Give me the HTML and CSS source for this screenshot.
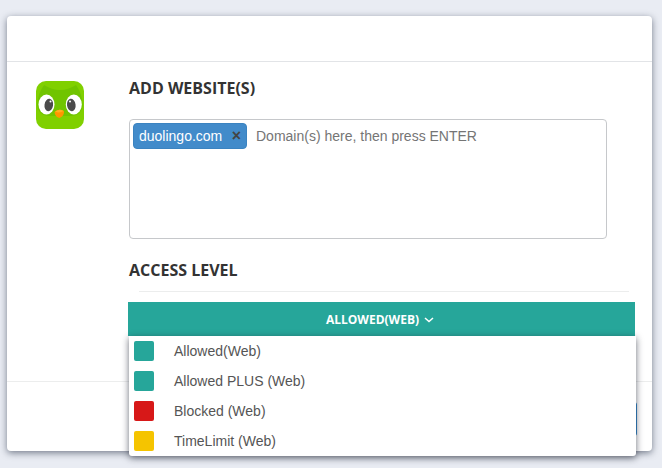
FILE: index.html
```html
<!DOCTYPE html>
<html lang="en">
<head>
<meta charset="utf-8">
<title>Add website</title>
<link rel="stylesheet" href="styles.css">
</head>
<body>
<div class="modal">
  <div class="modal-header"></div>
  <div class="modal-body">
    <svg class="app-icon" width="48" height="48" viewBox="0 0 48 48" aria-label="Duolingo">
      <rect width="48" height="48" rx="10" fill="#80d000"/>
      <path d="M8 4 Q16 9 24 9 Q32 9 40 4 Q46 12 47 24 Q46 34 36 35 H12 Q2 34 1 24 Q2 12 8 4Z" fill="#70c400"/>
      <ellipse cx="10.500" cy="23.500" rx="8" ry="10" fill="#fff"/>
      <ellipse cx="37.800" cy="23.500" rx="8" ry="10" fill="#fff"/>
      <ellipse cx="12.800" cy="24" rx="4.300" ry="6.200" fill="#4b4b4b" transform="rotate(8 12.800 24)"/>
      <ellipse cx="35.300" cy="24" rx="4.300" ry="6.200" fill="#4b4b4b" transform="rotate(-8 35.300 24)"/>
      <circle cx="14.500" cy="20.500" r="1" fill="#fff"/>
      <circle cx="34" cy="20.500" r="1" fill="#fff"/>
      <path d="M18.500 31 Q23 27 28 30 Q28.500 35 23.500 37 Q19 36 18.500 31Z" fill="#ff9600"/>
      <path d="M19 30.500 Q23.500 27.500 27.500 30 Q23.500 32.500 19 30.500Z" fill="#ffb020"/>
    </svg>
    <div class="form">
      <h3 class="label">ADD WEBSITE(S)</h3>
      <div class="tag-input">
        <span class="tag">duolingo.com<span class="tag-x">×</span></span>
        <span class="placeholder">Domain(s) here, then press ENTER</span>
      </div>
      <h3 class="label label-access">ACCESS LEVEL</h3>
      <div class="rule"></div>
      <div class="dropdown">
        <button class="dropdown-toggle" type="button">ALLOWED(WEB)
          <svg class="chevron" width="10" height="6" viewBox="0 0 10 6"><path d="M1 1l4 3.600L9 1" fill="none" stroke="#fff" stroke-width="1.500"/></svg>
        </button>
        <ul class="menu">
          <li class="menu-item"><span class="swatch swatch-green"></span>Allowed(Web)</li>
          <li class="menu-item"><span class="swatch swatch-green"></span>Allowed PLUS (Web)</li>
          <li class="menu-item"><span class="swatch swatch-red"></span>Blocked (Web)</li>
          <li class="menu-item"><span class="swatch swatch-yellow"></span>TimeLimit (Web)</li>
        </ul>
      </div>
    </div>
  </div>
  <div class="modal-footer"><button class="save" type="button"></button></div>
</div>
</body>
</html>
```
FILE: styles.css
```css
* { box-sizing: border-box; }
html, body { height: 100%; }
body {
  margin: 0;
  padding: 16px 10px 0 7px;
  background: #e9ecf3;
  overflow: hidden;
  font-family: "Liberation Sans", Arial, sans-serif;
}
.modal {
  width: 645px;
  height: 435px;
  background: #fff;
  border-radius: 4px;
  box-shadow: 0 2px 7px rgba(40, 50, 70, .6);
  display: flex;
  flex-direction: column;
}
.modal-header {
  height: 46px;
  border-bottom: 1px solid #e2e4e7;
  flex: none;
}
.modal-body {
  height: 319px;
  flex: none;
  padding: 18px 0 0 29px;
  display: flex;
  align-items: flex-start;
  gap: 45px;
}
.app-icon { flex: none; display: block; margin-top: 1px; }
.form { width: 508px; }
.label {
  margin: 0;
  font: 700 16px/16px "Open Sans", sans-serif;
  color: #333;
}
.tag-input {
  margin-top: 23px;
  width: 478px;
  height: 120px;
  border: 1px solid #c6c8cb;
  border-radius: 4px;
  padding: 3px;
  display: flex;
  align-items: flex-start;
  font-size: 14px;
  line-height: 26px;
}
.tag {
  background: #428bca;
  border-radius: 4px;
  color: #fff;
  height: 26px;
  width: 114px;
  padding: 0 6px 0 5px;
  display: flex;
  justify-content: space-between;
  white-space: nowrap;
  border: 1px solid #3b83c0;
  line-height: 24px;
}
.tag-x { color: #444; font-weight: 700; font-size: 16px; margin-right: -1px; }
.placeholder { color: #757575; margin-left: 9px; line-height: 27px; }
.label-access { margin-top: 23px; }
.rule { margin: 13px 8px 0 10px; height: 1px; background: #eceded; }
.dropdown { position: relative; margin-top: 10px; margin-left: -1px; width: 507px; }
.dropdown-toggle {
  display: flex;
  align-items: center;
  justify-content: center;
  gap: 5px;
  width: 100%;
  height: 34px;
  border: 0;
  padding: 1px 3px 0 0;
  background: #26a69a;
  color: #fff;
  font: 700 12px/16px "Open Sans", sans-serif;
}
.menu {
  position: absolute;
  top: 34px;
  left: 1px;
  width: 507px;
  height: 120px;
  margin: 0;
  padding: 0;
  list-style: none;
  background: #fff;
  border-radius: 0 0 3px 3px;
  box-shadow: 0 2px 7px rgba(30, 35, 50, .65);
}
.menu-item {
  height: 30px;
  padding-left: 5px;
  display: flex;
  align-items: center;
  gap: 20px;
  font-size: 14px;
  color: #555;
}
.swatch { width: 20px; height: 20px; border-radius: 2px; flex: none; }
.swatch-green { background: #26a69a; }
.swatch-red { background: #d71818; }
.swatch-yellow { background: #f5c400; }
.modal-footer {
  flex: 1;
  border-top: 1px solid #eceded;
  padding: 20px 15px 0 0;
  display: flex;
  justify-content: flex-end;
  align-items: flex-start;
}
.save { width: 60px; height: 34px; border: 0; border-radius: 3px; background: #2f86cc; }
```
